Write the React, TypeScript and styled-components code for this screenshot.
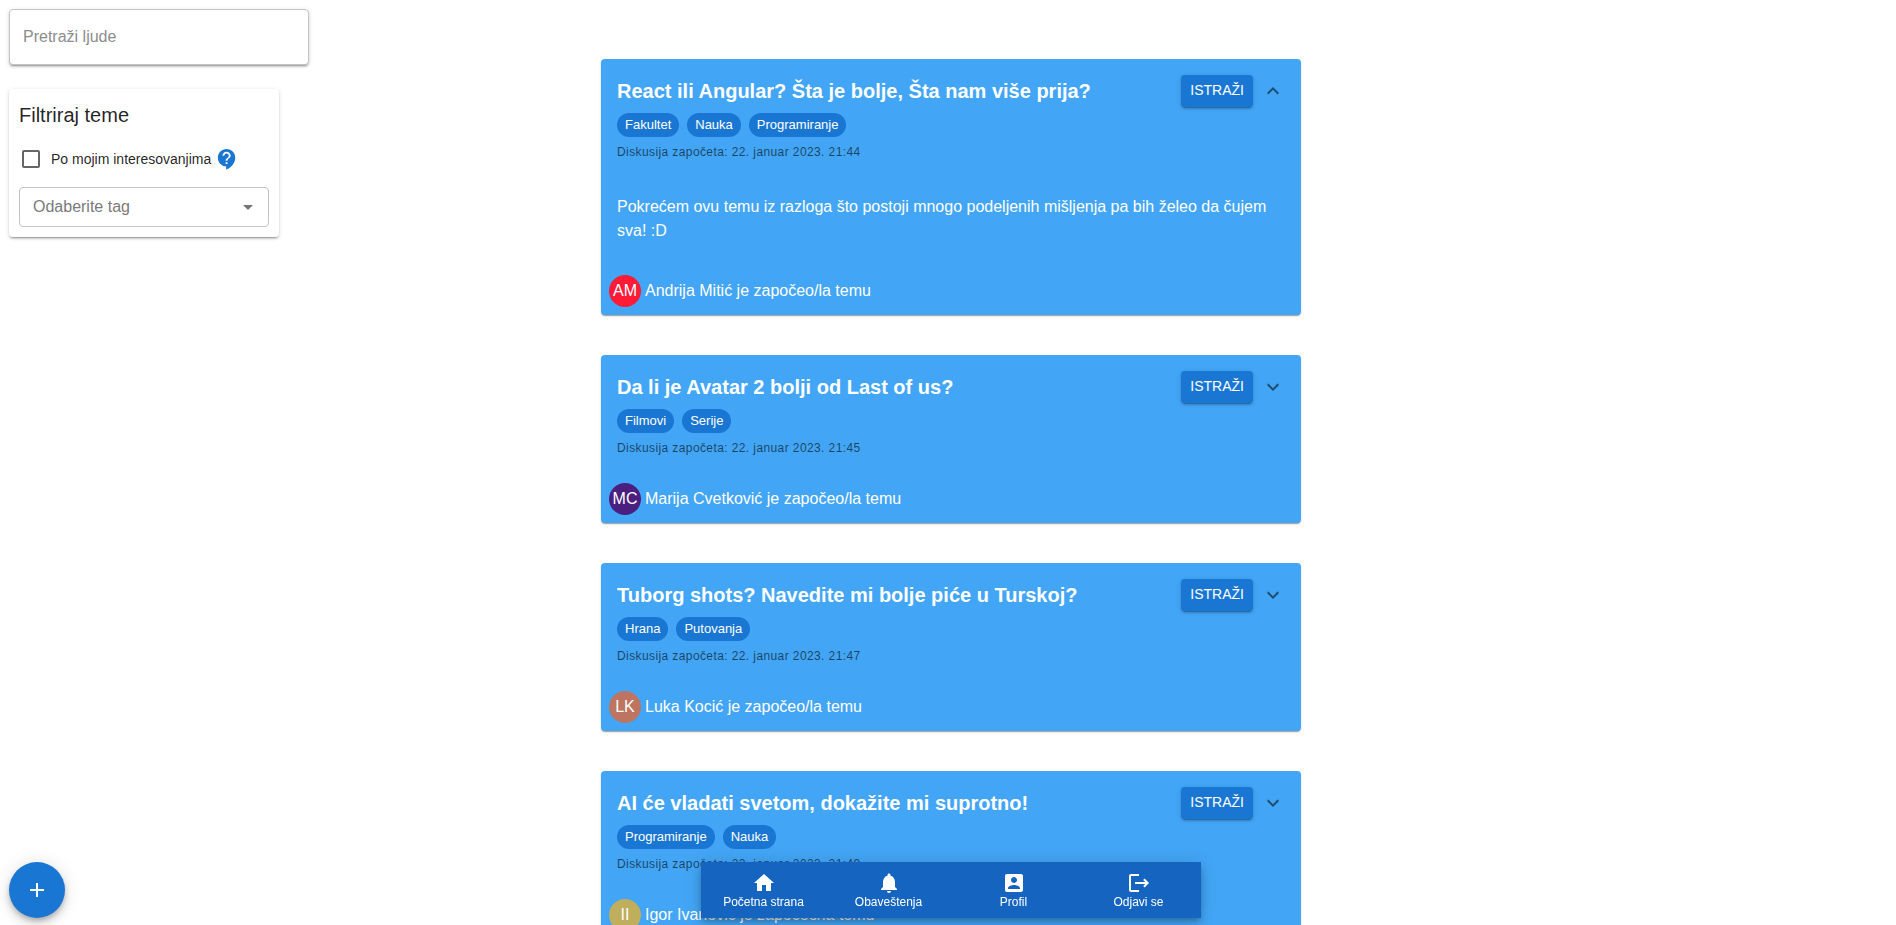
import React, { useState } from "react";
import styled, { createGlobalStyle } from "styled-components";

const GlobalStyle = createGlobalStyle`
  *, *::before, *::after { box-sizing: border-box; }
  html { scrollbar-width: none; }
  body {
    margin: 0;
    background: #fff;
    color: rgba(0, 0, 0, 0.87);
    font-family: "Liberation Sans", Arial, sans-serif;
    font-size: 16px;
    line-height: 24px;
  }
  button, input, select { font: inherit; }
`;

const shadowLow =
  "0 2px 1px -1px rgba(0,0,0,0.2), 0 1px 1px 0 rgba(0,0,0,0.14), 0 1px 3px 0 rgba(0,0,0,0.12)";
const shadowMid =
  "0 3px 1px -2px rgba(0,0,0,0.2), 0 2px 2px 0 rgba(0,0,0,0.14), 0 1px 5px 0 rgba(0,0,0,0.12)";
const shadowHigh =
  "0 3px 5px -1px rgba(0,0,0,0.2), 0 6px 10px 0 rgba(0,0,0,0.14), 0 1px 18px 0 rgba(0,0,0,0.12)";

const Page = styled.div`
  display: grid;
  grid-template-columns: minmax(300px, 1fr) minmax(0, 700px) minmax(0, 1fr);
  padding: 9px 3px 40px 9px;
`;

const Sidebar = styled.aside`
  display: flex;
  flex-direction: column;
  align-items: flex-start;
  gap: 24px;
`;

const SearchInput = styled.input`
  width: 300px;
  height: 56px;
  padding: 0 13px;
  border: 1px solid #c4c4c4;
  border-radius: 4px;
  background: #fff;
  color: inherit;
  box-shadow: ${shadowMid};
  &::placeholder { color: #8c8c8c; opacity: 1; }
`;

const FilterPanel = styled.section`
  width: 270px;
  padding: 10px;
  border-radius: 4px;
  box-shadow: ${shadowMid};
`;

const FilterTitle = styled.h2`
  margin: 0;
  font-size: 20px;
  line-height: 32px;
  font-weight: 400;
`;

const CheckRow = styled.div`
  display: flex;
  align-items: center;
  height: 42px;
  margin: 7px 0;
  padding-left: 3px;
  font-size: 14px;
  line-height: 20px;
`;

const CheckLabel = styled.label`
  display: flex;
  align-items: center;
  gap: 11px;
`;

const CheckBox = styled.input`
  appearance: none;
  width: 18px;
  height: 18px;
  margin: 0;
  border: 2px solid #666;
  border-radius: 2px;
  background: #fff;
  &:checked { background: #1976d2; border-color: #1976d2; }
`;

const HelpButton = styled.button`
  display: flex;
  padding: 0;
  margin-left: 5px;
  border: 0;
  background: none;
  color: #1976d2;
`;

const SelectWrap = styled.div`
  display: grid;
  align-items: center;
  & > * { grid-area: 1 / 1; }
  & > svg { justify-self: end; margin-right: 9px; color: #757575; pointer-events: none; }
`;

const TagSelect = styled.select`
  appearance: none;
  width: 100%;
  height: 40px;
  padding: 0 13px;
  border: 1px solid #c4c4c4;
  border-radius: 4px;
  background: #fff;
  color: #7a7a7a;
`;

const Feed = styled.main`
  display: flex;
  flex-direction: column;
  gap: 40px;
  padding-top: 50px;
`;

const Card = styled.article`
  border-radius: 4px;
  background: #42a5f5;
  color: #fff;
  box-shadow: ${shadowLow};
`;

const CardHeader = styled.header`
  display: flex;
  align-items: flex-start;
  padding: 16px;
`;

const CardHeading = styled.div`
  flex: 1;
  min-width: 0;
`;

const CardTitle = styled.h2`
  margin: 0;
  font-size: 20px;
  line-height: 32px;
  font-weight: 700;
`;

const Tags = styled.ul`
  display: flex;
  flex-wrap: wrap;
  gap: 8px;
  margin: 6px 0 4px;
  padding: 0;
  list-style: none;
`;

const Tag = styled.li`
  padding: 0 8px;
  border-radius: 12px;
  background: #1976d2;
  font-size: 13px;
  line-height: 24px;
`;

const Started = styled.time`
  display: block;
  font-size: 12px;
  line-height: 22px;
  letter-spacing: 0.03333em;
  color: rgba(0, 0, 0, 0.6);
`;

const CardTools = styled.div`
  display: flex;
  align-items: center;
  gap: 8px;
  height: 32px;
`;

const ExploreButton = styled.button`
  height: 32px;
  padding: 0 9px 3px;
  border: 0;
  border-radius: 4px;
  background: #1976d2;
  color: #fff;
  font-size: 14px;
  line-height: 24px;
  text-transform: uppercase;
  box-shadow: ${shadowMid};
`;

const ToggleButton = styled.button`
  display: flex;
  padding: 0;
  border: 0;
  background: none;
  color: rgba(0, 0, 0, 0.54);
`;

const CardText = styled.p`
  margin: 0;
  padding: 16px 16px 24px;
`;

const Author = styled.footer`
  display: flex;
  align-items: center;
  gap: 4px;
  padding: 8px;
`;

const Avatar = styled.span<{ $color: string }>`
  display: grid;
  place-items: center;
  width: 32px;
  height: 32px;
  border-radius: 50%;
  background: ${(p) => p.$color};
`;

const AddButton = styled.button`
  position: fixed;
  left: 9px;
  bottom: 7px;
  display: grid;
  place-items: center;
  width: 56px;
  height: 56px;
  padding: 0;
  border: 0;
  border-radius: 50%;
  background: #1976d2;
  color: #fff;
  box-shadow: ${shadowHigh};
`;

const BottomNav = styled.nav`
  position: fixed;
  left: 50%;
  bottom: 7px;
  display: flex;
  width: 500px;
  height: 56px;
  margin-left: -247px;
  background: #1565c0;
  box-shadow: ${shadowHigh};
`;

const NavItem = styled.a`
  flex: 1;
  display: flex;
  flex-direction: column;
  align-items: center;
  justify-content: center;
  color: #fff;
  font-size: 12px;
  line-height: 14px;
  text-decoration: none;
`;

function Icon({ d, size = 24 }: { d: string; size?: number }) {
  return (
    <svg width={size} height={size} viewBox="0 0 24 24" fill="currentColor" aria-hidden="true">
      <path d={d} />
    </svg>
  );
}

const icons = {
  help: "M11 23.59v-3.6c-5.01-.26-9-4.42-9-9.49C2 5.26 6.26 1 11.5 1S21 5.26 21 10.5c0 4.95-3.44 9.93-8.57 12.4l-1.43.69zM10.5 15.5v2h2v-2h-2zm1-11.5C9.01 4 7 6.01 7 8.5h2c0-1.38 1.12-2.5 2.5-2.5S14 7.12 14 8.5c0 2.25-3.5 2.25-3.5 5.5h2c0-2.5 3.5-2.75 3.5-5.5C16 6.01 13.99 4 11.5 4z",
  drop: "M7 10l5 5 5-5z",
  up: "M7.41 15.41 12 10.83l4.59 4.58L18 14l-6-6-6 6z",
  down: "M7.41 8.59 12 13.17l4.59-4.58L18 10l-6 6-6-6 1.41-1.41z",
  add: "M19 13h-6v6h-2v-6H5v-2h6V5h2v6h6v2z",
  home: "M10 20v-6h4v6h5v-8h3L12 3 2 12h3v8z",
  bell: "M12 22c1.1 0 2-.9 2-2h-4c0 1.1.89 2 2 2zm6-6v-5c0-3.07-1.64-5.64-4.5-6.32V4c0-.83-.67-1.5-1.5-1.5s-1.5.67-1.5 1.5v.68C7.63 5.36 6 7.92 6 11v5l-2 2v1h16v-1l-2-2z",
  profile: "M3 5v14c0 1.1.89 2 2 2h14c1.1 0 2-.9 2-2V5c0-1.1-.9-2-2-2H5c-1.11 0-2 .9-2 2zm12 4c0 1.66-1.34 3-3 3s-3-1.34-3-3 1.34-3 3-3 3 1.34 3 3zm-9 8c0-2 4-3.1 6-3.1s6 1.1 6 3.1v1H6v-1z",
  logout: "M4 3h8v2H4v14h8v2H4c-1.1 0-2-.9-2-2V5c0-1.1.9-2 2-2zM17.6 7.6 22 12l-4.4 4.4-1.4-1.4 2-2H8v-2h10.2l-2-2z",
};

interface Topic {
  title: string;
  tags: string[];
  time: string;
  text?: string;
  author: string;
  initials: string;
  color: string;
}

const topics: Topic[] = [
  {
    title: "React ili Angular? Šta je bolje, Šta nam više prija?",
    tags: ["Fakultet", "Nauka", "Programiranje"],
    time: "21:44",
    text: "Pokrećem ovu temu iz razloga što postoji mnogo podeljenih mišljenja pa bih želeo da čujem sva! :D",
    author: "Andrija Mitić",
    initials: "AM",
    color: "#ff1a35",
  },
  {
    title: "Da li je Avatar 2 bolji od Last of us?",
    tags: ["Filmovi", "Serije"],
    time: "21:45",
    author: "Marija Cvetković",
    initials: "MC",
    color: "#4a1f80",
  },
  {
    title: "Tuborg shots? Navedite mi bolje piće u Turskoj?",
    tags: ["Hrana", "Putovanja"],
    time: "21:47",
    author: "Luka Kocić",
    initials: "LK",
    color: "#bd7460",
  },
  {
    title: "AI će vladati svetom, dokažite mi suprotno!",
    tags: ["Programiranje", "Nauka"],
    time: "21:49",
    author: "Igor Ivanović",
    initials: "II",
    color: "#bfae5c",
  },
];

function TopicCard({ topic }: { topic: Topic }) {
  const [open, setOpen] = useState(Boolean(topic.text));
  return (
    <Card>
      <CardHeader>
        <CardHeading>
          <CardTitle>{topic.title}</CardTitle>
          <Tags>
            {topic.tags.map((tag) => (
              <Tag key={tag}>{tag}</Tag>
            ))}
          </Tags>
          <Started>Diskusija započeta: 22. januar 2023. {topic.time}</Started>
        </CardHeading>
        <CardTools>
          <ExploreButton type="button">Istraži</ExploreButton>
          <ToggleButton
            type="button"
            aria-label="Prikaži opis"
            aria-expanded={open}
            onClick={() => setOpen(!open)}
          >
            <Icon d={open ? icons.up : icons.down} />
          </ToggleButton>
        </CardTools>
      </CardHeader>
      {open && topic.text && <CardText>{topic.text}</CardText>}
      <Author>
        <Avatar $color={topic.color}>{topic.initials}</Avatar>
        <span>{topic.author} je započeo/la temu</span>
      </Author>
    </Card>
  );
}

export default function App() {
  return (
    <>
      <GlobalStyle />
      <Page>
        <Sidebar>
          <SearchInput type="text" placeholder="Pretraži ljude" aria-label="Pretraži ljude" />
          <FilterPanel>
            <FilterTitle>Filtriraj teme</FilterTitle>
            <CheckRow>
              <CheckLabel>
                <CheckBox type="checkbox" />
                Po mojim interesovanjima
              </CheckLabel>
              <HelpButton type="button" aria-label="Pomoć">
                <Icon d={icons.help} size={22} />
              </HelpButton>
            </CheckRow>
            <SelectWrap>
              <TagSelect aria-label="Odaberite tag" defaultValue="">
                <option value="">Odaberite tag</option>
                <option>Programiranje</option>
                <option>Nauka</option>
              </TagSelect>
              <Icon d={icons.drop} />
            </SelectWrap>
          </FilterPanel>
        </Sidebar>
        <Feed>
          {topics.map((topic) => (
            <TopicCard key={topic.title} topic={topic} />
          ))}
        </Feed>
      </Page>
      <AddButton type="button" aria-label="Dodaj temu">
        <Icon d={icons.add} />
      </AddButton>
      <BottomNav>
        <NavItem href="#pocetna">
          <Icon d={icons.home} />
          Početna strana
        </NavItem>
        <NavItem href="#obavestenja">
          <Icon d={icons.bell} />
          Obaveštenja
        </NavItem>
        <NavItem href="#profil">
          <Icon d={icons.profile} />
          Profil
        </NavItem>
        <NavItem href="#odjava">
          <Icon d={icons.logout} />
          Odjavi se
        </NavItem>
      </BottomNav>
    </>
  );
}
